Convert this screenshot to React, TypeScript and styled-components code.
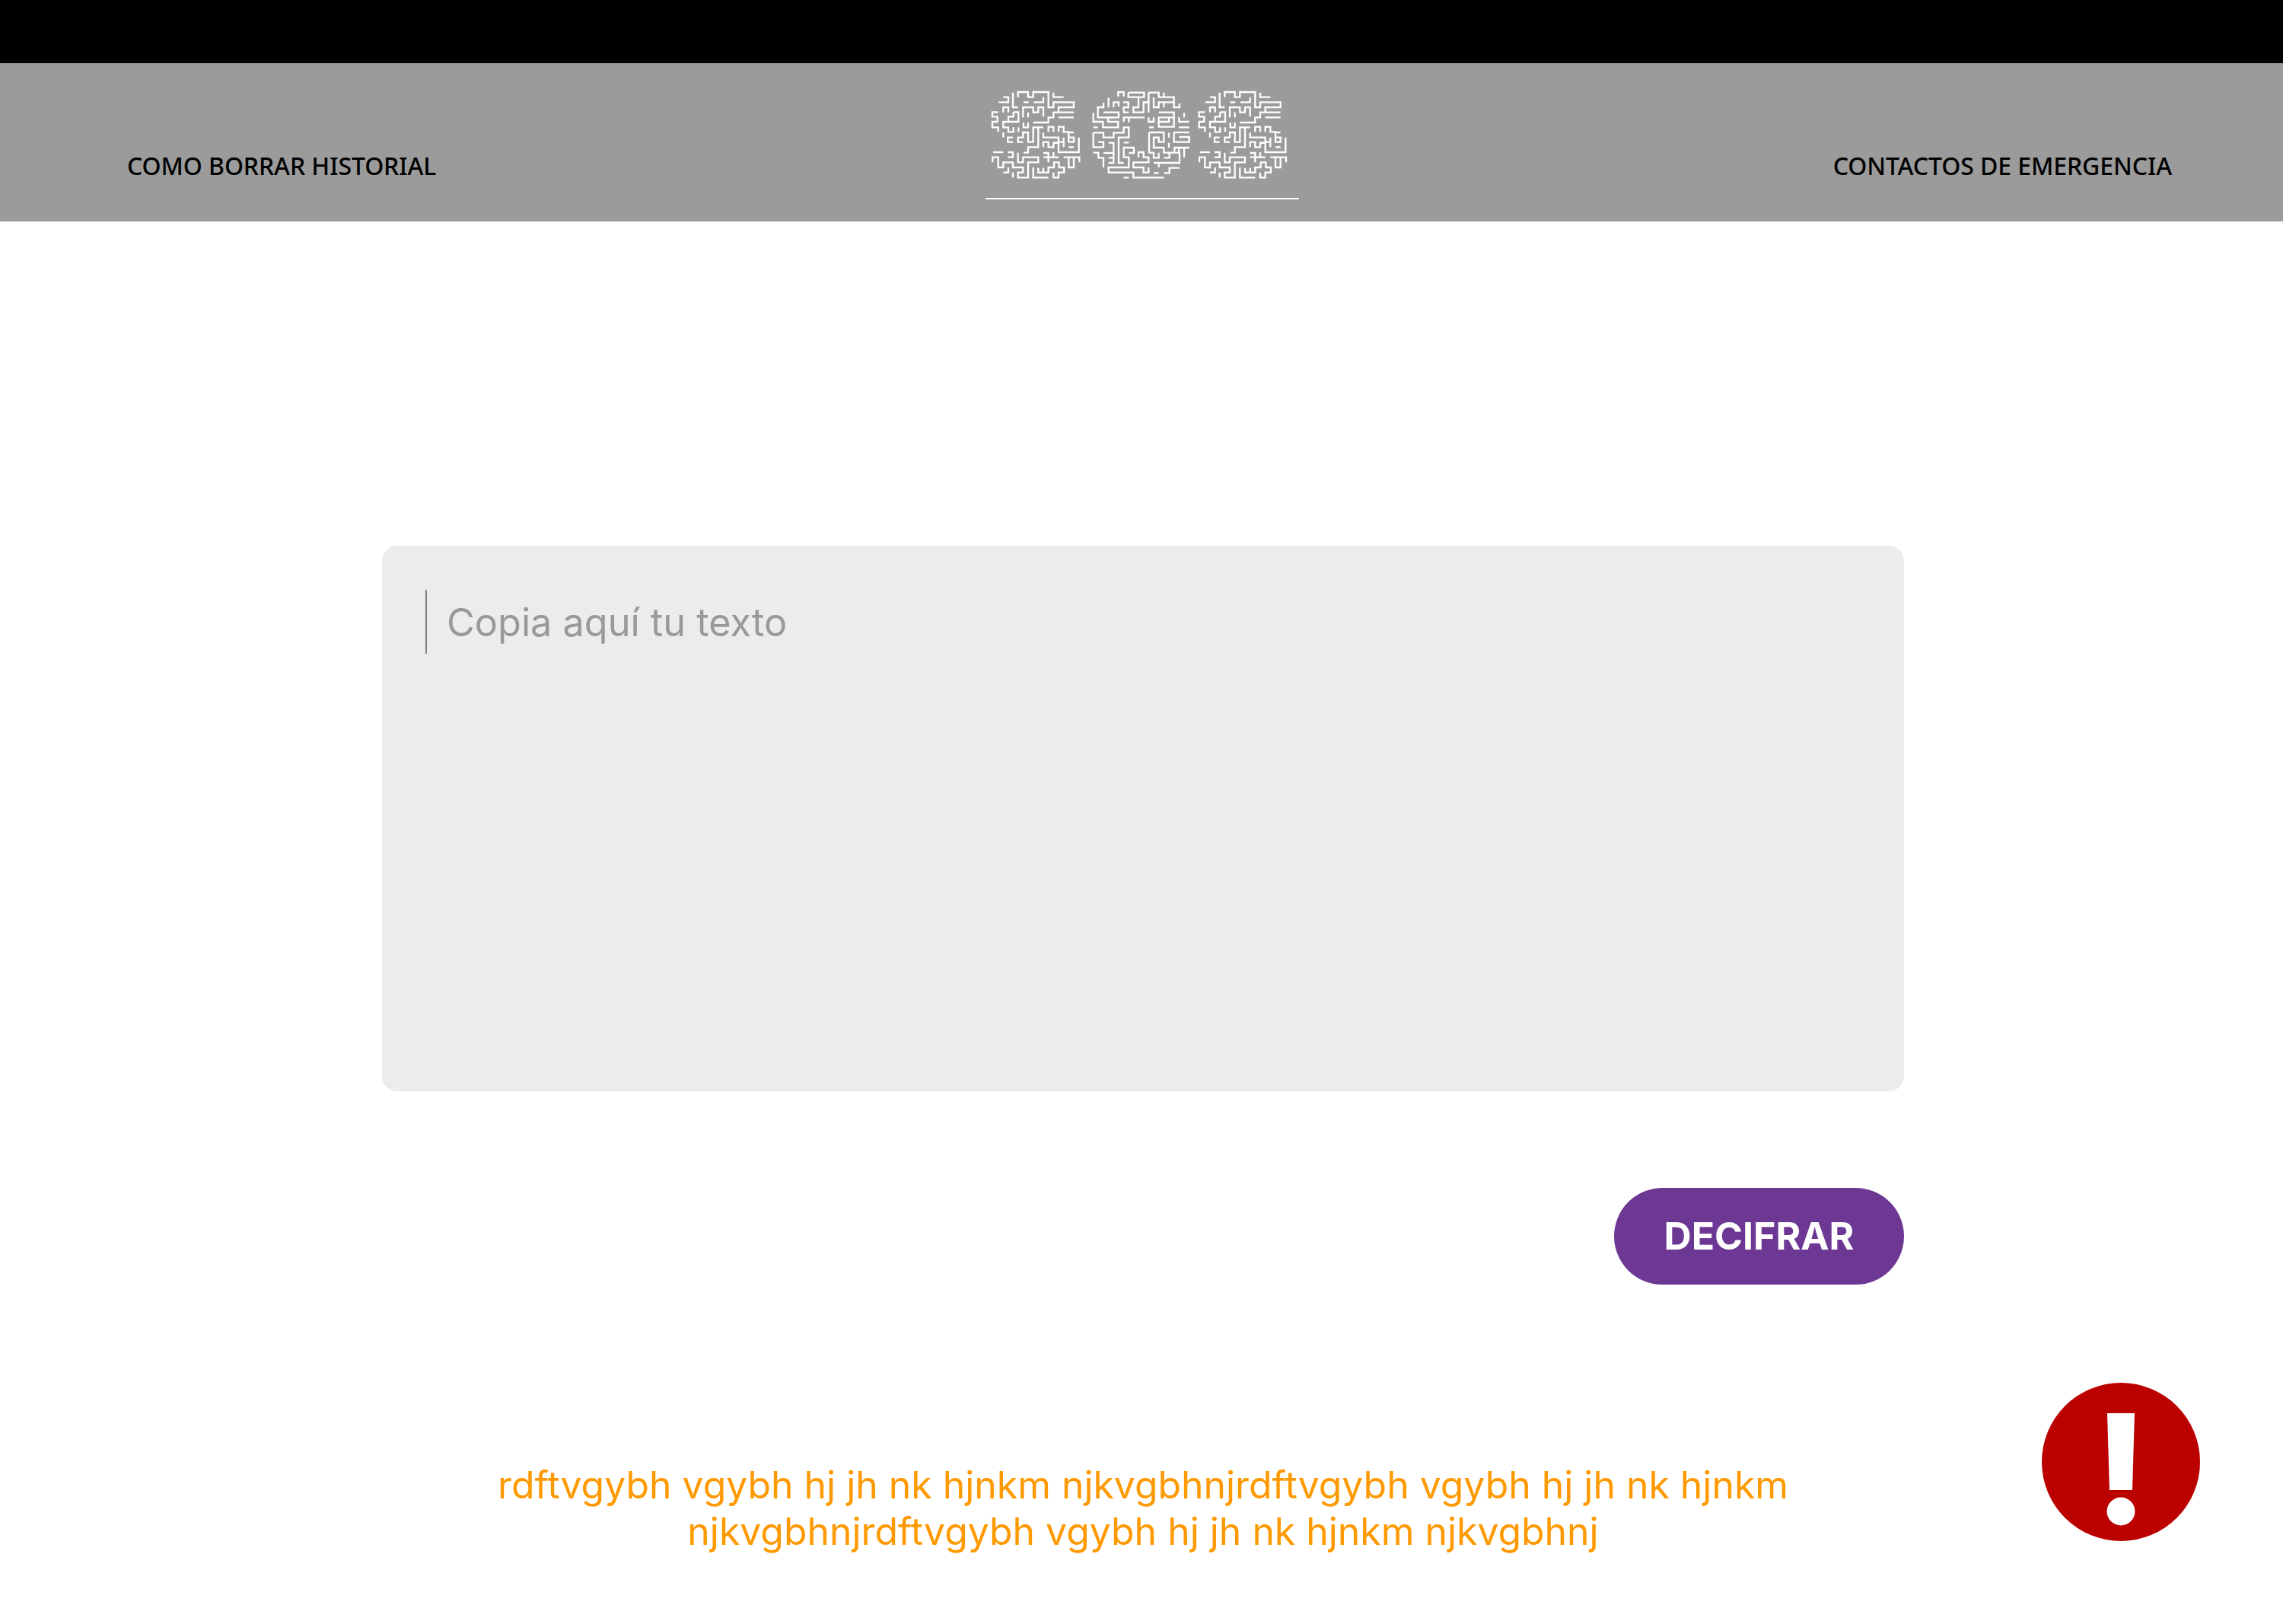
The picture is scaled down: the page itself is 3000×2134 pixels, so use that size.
import React from "react";
import styled, { createGlobalStyle } from "styled-components";

// Maze lettering, traced on the logo at 3x
const LETTER_S = [
  "M52 58H90V38H70",
  "M108 20V78H128",
  "M128 38V18H168V38H188V18H248V78H268V58H348V78H308",
  "M190 58H228V38",
  "M150 58H170",
  "M268 20V38H308",
  "M70 98V78H90V98",
  "M148 118V78H188V98H208V78H228V115",
  "M168 98V118",
  "M348 98H288V78H308M288 98H268V118H248V138H188",
  "M288 118H348",
  "M50 97H27V115H47V135H27V157H50V175",
  "M110 97H130V135H90V115H110V97",
  "M90 135H70V157H90V175H110V157",
  "M130 157V175",
  "M150 138V157H168V138",
  "M148 215H128V197H148V177H168V215H188V157H228",
  "M208 157V235H168V257H150",
  "M108 197H88V215H108",
  "M70 177V197",
  "M30 255H70",
  "M88 255H108V275H88",
  "M128 257V295H148V275H208V295H168V355H128V335H148V315H108V295H70V315H50V275H28V295",
  "M228 178V197H288V215H308V197",
  "M248 175V155H268V175",
  "M288 175V155H308V175H328V197H348V215H328V197",
  "M328 177H348",
  "M368 197V255H288V218H268V235H248V215H228V235",
  "M268 218H288",
  "M308 218V235",
  "M328 235H348",
  "M228 258H248V275H268V255",
  "M228 275H248V295",
  "M268 275H288",
  "M308 275H370V295",
  "M328 275V315H348V275",
  "M70 335H90V315",
  "M108 335V355",
  "M188 315V355H248",
  "M208 317V335H248V315H270V295H290V315H310V335H288V355H268V335",
  "M228 317V335",
];

const LETTER_O = [
  "M118 35V18H140V35",
  "M158 20H220V38H198V78H178V98H218V58H238V98",
  "M158 20V38H198",
  "M80 40V78",
  "M100 78V58H120V75",
  "M138 58H158V78H140V98H160",
  "M238 20H278V38H298V20",
  "M238 20V58H218",
  "M258 38V78H278V58H338V38H298",
  "M298 58V78",
  "M338 58V78H360V62",
  "M60 60V78H38V118H120V98H60",
  "M20 100V135H58V157H118V135H78V118H100",
  "M140 135V118H222",
  "M160 118V137",
  "M238 118V135H258V118",
  "M278 98H338V118H278V135H318V118",
  "M278 135V155H338V118",
  "M378 100V118",
  "M358 118V135H398",
  "M358 157H398",
  "M20 157H38",
  "M240 157H258",
  "M20 178H60V197H100V178H140V157H160V197H120V297H140",
  "M20 178V235H60V215H40",
  "M80 218H100V297H80",
  "M60 258H100",
  "M80 277H100",
  "M140 217H160",
  "M140 258V237H180V258H160",
  "M20 257H40V277H60V315",
  "M140 258V275H160V315H80V335H178V355H298",
  "M140 355H160",
  "M198 275V255H218V275H238V295H178V315H218V335H238V315",
  "M240 177H298V215H278V197H258V237H298V257H320",
  "M240 177V257H258V277H278V257",
  "M318 178V197",
  "M318 218V237",
  "M338 177H398",
  "M338 177V215H398V195H358",
  "M340 257V237H398",
  "M358 237V257",
  "M378 237V275",
  "M258 297H360V257H320V277H298",
  "M278 297V315",
  "M298 337H320V317H360",
  "M258 337H278",
];

const Logo: React.FC = () => (
  <LogoMark viewBox="0 0 1236 375" fill="none" stroke="#fff" strokeWidth={7}>
    <g>
      {LETTER_S.map((d) => <path key={d} d={d} />)}
    </g>
    <g transform="translate(405 0)">
      {LETTER_O.map((d) => <path key={d} d={d} />)}
    </g>
    <g transform="translate(815 0)">
      {LETTER_S.map((d) => <path key={d} d={d} />)}
    </g>
  </LogoMark>
);

export default function App() {
  return (
    <Page>
      <GlobalStyle />
      <TopBar />
      <Header>
        <NavLink>COMO BORRAR HISTORIAL</NavLink>
        <LogoBlock>
          <Logo />
        </LogoBlock>
        <NavLink>CONTACTOS DE EMERGENCIA</NavLink>
      </Header>
      <Main>
        <TextBox>
          <Caret />
          <Placeholder>Copia aquí tu texto</Placeholder>
        </TextBox>
        <Actions>
          <DecipherButton>DECIFRAR</DecipherButton>
        </Actions>
        <Result>
          rdftvgybh vgybh hj jh nk hjnkm njkvgbhnjrdftvgybh vgybh hj jh nk hjnkm
          <br />
          njkvgbhnjrdftvgybh vgybh hj jh nk hjnkm njkvgbhnj
        </Result>
      </Main>
      <AlertButton viewBox="0 0 208 208">
        <circle cx="104" cy="104" r="104" fill="#bb0000" />
        <path d="M86 40H122L119 141H89Z" fill="#fff" />
        <circle cx="104" cy="169" r="18.5" fill="#fff" />
      </AlertButton>
    </Page>
  );
}

const GlobalStyle = createGlobalStyle`
  html, body {
    margin: 0;
    padding: 0;
    background: #fff;
  }
`;

const Page = styled.div`
  position: relative;
  width: 3000px;
  height: 2134px;
  overflow: hidden;
  font-family: Inter, "Liberation Sans", sans-serif;
`;

const TopBar = styled.div`
  height: 83px;
  background: #000;
`;

const Header = styled.header`
  box-sizing: border-box;
  height: 208px;
  padding: 0 146px 30px 148px;
  display: flex;
  justify-content: space-between;
  align-items: flex-end;
  background: #9b9b9b;
`;

const NavLink = styled.a`
  box-sizing: border-box;
  width: 470px;
  margin-bottom: 21px;
  font-family: "Noto Sans", sans-serif;
  font-size: 32px;
  font-weight: 500;
  line-height: 44px;
  letter-spacing: -0.1px;
  color: #000;
  white-space: nowrap;
  &:first-child {
    padding-left: 19px;
  }
  &:last-child {
    text-align: right;
  }
`;

const LogoBlock = styled.div`
  width: 412px;
  height: 145px;
  margin-bottom: -1px;
  border-bottom: 2px solid #fff;
`;

const LogoMark = styled.svg`
  display: block;
  width: 412px;
  height: 125px;
`;

const Main = styled.main`
  padding: 426px 498px 0 502px;
  display: flex;
  flex-direction: column;
`;

const TextBox = styled.div`
  box-sizing: border-box;
  height: 717px;
  padding: 58px 57px;
  display: flex;
  align-items: flex-start;
  gap: 26px;
  background: #ececec;
  border-radius: 20px;
`;

const Caret = styled.span`
  flex: none;
  width: 2px;
  height: 84px;
  background: #808080;
`;

const Placeholder = styled.span`
  font-size: 50.4px;
  font-weight: 400;
  line-height: 86px;
  color: #999;
`;

const Actions = styled.div`
  margin-top: 127px;
  display: flex;
  justify-content: flex-end;
`;

const DecipherButton = styled.button`
  width: 381px;
  height: 127px;
  padding: 0 0 2px;
  border: 0;
  border-radius: 64px;
  background: #6d3794;
  color: #fff;
  font-family: inherit;
  font-size: 50px;
  font-weight: 700;
`;

const Result = styled.p`
  margin: 233px -4px 0 -4px;
  font-size: 49.9px;
  font-weight: 400;
  line-height: 61px;
  text-align: center;
  color: #ff9900;
`;

const AlertButton = styled.svg`
  position: absolute;
  left: 2683px;
  top: 1817px;
  width: 208px;
  height: 208px;
`;
